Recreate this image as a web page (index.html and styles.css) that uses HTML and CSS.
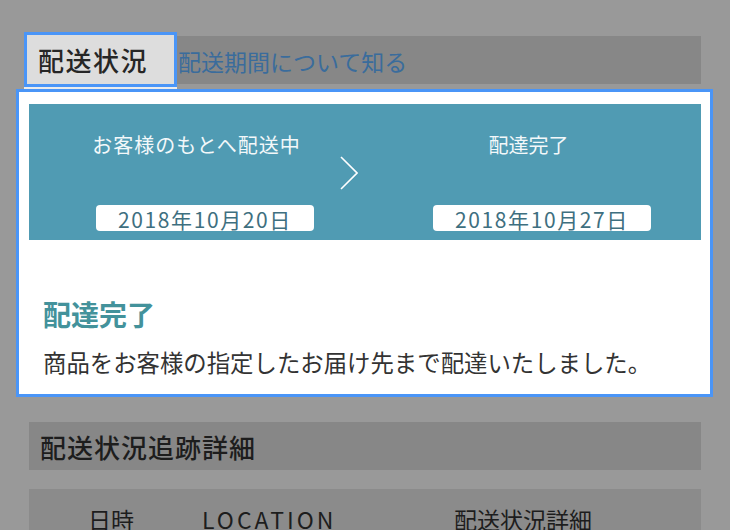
FILE: index.html
```html
<!DOCTYPE html>
<html lang="ja">
<head>
<meta charset="utf-8">
<title>配送状況</title>
<link rel="stylesheet" href="styles.css">
</head>
<body>
<div class="page">
  <div class="tabbar">
    <div class="tab">配送状況</div>
    <a class="link">配送期間について知る</a>
  </div>

  <div class="card">
    <div class="steps">
      <div class="col col-a">
        <div class="label">お客様のもとへ配送中</div>
        <div class="pill">2018年10月20日</div>
      </div>
      <svg class="arrow" width="18" height="34" viewBox="0 0 18 34">
        <polyline points="1,1 17,17 1,33" fill="none" stroke="#ffffff" stroke-width="1.6"/>
      </svg>
      <div class="col col-b">
        <div class="label">配達完了</div>
        <div class="pill">2018年10月27日</div>
      </div>
    </div>
    <div class="result">
      <h2 class="result-title">配達完了</h2>
      <p class="result-text">商品をお客様の指定したお届け先まで配達いたしました。</p>
    </div>
  </div>

  <div class="section-head">配送状況追跡詳細</div>

  <div class="table-head">
    <span>日時</span>
    <span>LOCATION</span>
    <span>配送状況詳細</span>
  </div>
</div>
</body>
</html>
```

FILE: styles.css
```css
* { box-sizing: border-box; }

html, body {
  margin: 0;
  padding: 0;
  background: #999999;
  height: 100%;
  overflow: hidden;
}

body {
  font-family: "Noto Sans CJK JP", "Noto Sans", sans-serif;
  color: #1f1f1f;
}

.page {
  padding: 36px 29px 0 29px;
}

.tabbar {
  display: flex;
  align-items: center;
  height: 48px;
  background: #878787;
}

.tab {
  display: flex;
  align-items: center;
  width: 153px;
  height: 55px;
  margin: -4px 0 -3px -5px;
  padding-left: 11px;
  border: 3px solid #4a95f7;
  background: #dddddd;
  box-shadow: 0 2px 0 #ececec;
  font-size: 26px;
  font-weight: 500;
  letter-spacing: 1.5px;
  line-height: 1;
  color: #262626;
}

.link {
  margin-left: 1px;
  font-size: 23px;
  color: #3a6c9c;
  line-height: 1;
  padding-top: 2px;
}

.card {
  margin: 5px -12px 0 -13px;
  border: 3px solid #4a95f7;
  background: #ffffff;
  padding: 12px 9px 15px 10px;
}

.steps {
  display: flex;
  align-items: flex-start;
  height: 136px;
  padding: 27px 0 0 67px;
  background: #509bb3;
  color: #f3f8fa;
}

.col {
  width: 218px;
  display: flex;
  flex-direction: column;
  align-items: center;
}

.label {
  font-size: 20px;
  line-height: 28px;
  height: 28px;
  white-space: nowrap;
}

.col-a .label { margin-right: 17px; letter-spacing: 1px; }
.col-b .label { margin-right: 27px; }

.arrow {
  margin: 25px 75px 0 26px;
  flex: none;
}

.pill {
  margin-top: 46px;
  width: 218px;
  height: 26px;
  background: #ffffff;
  border-radius: 4px;
  color: #3e6f80;
  font-size: 21px;
  line-height: 28px;
  letter-spacing: 1.6px;
  text-align: center;
  white-space: nowrap;
}

.result {
  padding: 55px 0 0 14px;
}

.result-title {
  margin: 0;
  font-size: 28px;
  line-height: 39px;
  font-weight: 700;
  color: #43929b;
}

.result-text {
  margin: 11px 0 0 0;
  font-size: 23.4px;
  line-height: 34px;
  color: #333333;
}

.section-head {
  margin-top: 25px;
  height: 48px;
  display: flex;
  align-items: center;
  padding-left: 11px;
  background: #878787;
  font-size: 26px;
  font-weight: 500;
  letter-spacing: 1px;
  color: #1d1d1d;
}

.table-head {
  margin-top: 19px;
  height: 60px;
  background: #8b8b8b;
  display: grid;
  grid-template-columns: 114px 252px auto;
  padding: 15px 0 0 59px;
  font-size: 23px;
  line-height: 31px;
  color: #1d1d1d;
}

.table-head span:nth-child(2) {
  letter-spacing: 3px;
}
```
